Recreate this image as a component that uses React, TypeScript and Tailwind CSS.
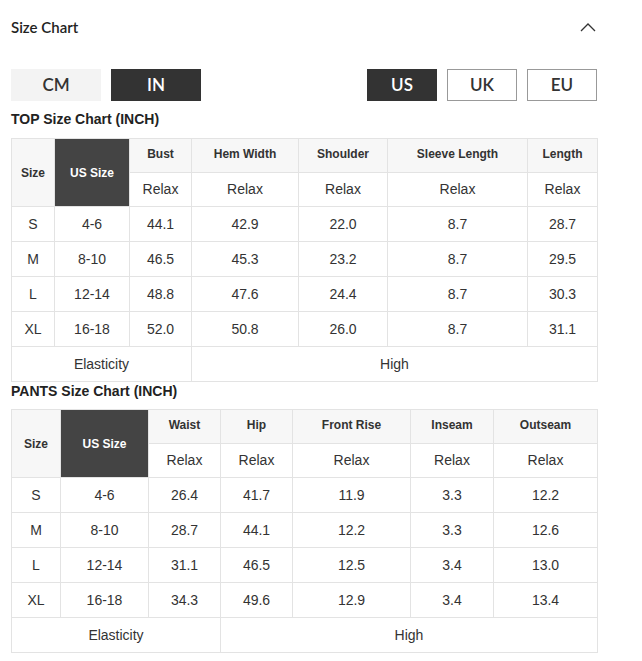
import { ReactNode } from 'react'

type Chart = {
  title: string
  widths: number[]
  cols: string[]
  rows: string[][]
  elasticSpan: number
}

const top: Chart = {
  title: 'TOP Size Chart (INCH)',
  widths: [43, 75, 62, 107, 89, 140, 70],
  cols: ['Bust', 'Hem Width', 'Shoulder', 'Sleeve Length', 'Length'],
  rows: [
    ['S', '4-6', '44.1', '42.9', '22.0', '8.7', '28.7'],
    ['M', '8-10', '46.5', '45.3', '23.2', '8.7', '29.5'],
    ['L', '12-14', '48.8', '47.6', '24.4', '8.7', '30.3'],
    ['XL', '16-18', '52.0', '50.8', '26.0', '8.7', '31.1'],
  ],
  elasticSpan: 3,
}

const pants: Chart = {
  title: 'PANTS Size Chart (INCH)',
  widths: [49, 88, 72, 72, 118, 83, 104],
  cols: ['Waist', 'Hip', 'Front Rise', 'Inseam', 'Outseam'],
  rows: [
    ['S', '4-6', '26.4', '41.7', '11.9', '3.3', '12.2'],
    ['M', '8-10', '28.7', '44.1', '12.2', '3.3', '12.6'],
    ['L', '12-14', '31.1', '46.5', '12.5', '3.4', '13.0'],
    ['XL', '16-18', '34.3', '49.6', '12.9', '3.4', '13.4'],
  ],
  elasticSpan: 3,
}

function Cell({ children, className = '', ...rest }: { children?: ReactNode; className?: string; colSpan?: number; rowSpan?: number }) {
  return (
    <td {...rest} className={`border border-[#e3e3e3] text-center p-0 ${className}`}>
      {children}
    </td>
  )
}

function SizeTable({ chart, first }: { chart: Chart; first?: boolean }) {
  return (
    <>
      <div className={`text-[14px] font-bold leading-[18px] text-[#222] ${first ? 'mt-[9px] mb-[10px]' : 'mt-0 mb-[9px]'}`}>
        {chart.title}
      </div>
      <table className="w-[586px] table-fixed border-collapse font-['Liberation_Sans',Arial,sans-serif] text-[#333]">
        <colgroup>
          {chart.widths.map((w, i) => (
            <col key={i} style={{ width: w }} />
          ))}
        </colgroup>
        <tbody>
          <tr className="h-[34px]">
            <Cell rowSpan={2} className="bg-[#f7f7f7] text-[12px] font-bold">Size</Cell>
            <Cell rowSpan={2} className="bg-[#444444] text-white text-[12px] font-bold">US Size</Cell>
            {chart.cols.map((c) => (
              <Cell key={c} className="bg-[#f7f7f7] pb-[3px] text-[12px] font-bold">{c}</Cell>
            ))}
          </tr>
          <tr className="h-[34px]">
            {chart.cols.map((c) => (
              <Cell key={c} className="text-[14px]">Relax</Cell>
            ))}
          </tr>
          {chart.rows.map((r) => (
            <tr key={r[0]} className="h-[35px]">
              {r.map((v, i) => (
                <Cell key={i} className="text-[14px]">{v}</Cell>
              ))}
            </tr>
          ))}
          <tr className="h-[35px]">
            <Cell colSpan={chart.elasticSpan} className="text-[14px]">Elasticity</Cell>
            <Cell colSpan={7 - chart.elasticSpan} className="text-[14px]">High</Cell>
          </tr>
        </tbody>
      </table>
    </>
  )
}

export default function App() {
  return (
    <div className="min-h-[661px] w-[642px] bg-white font-['Liberation_Sans',Arial,sans-serif] text-[#333]">
      <div className="ml-[11px] w-[586px]">
        <div className="flex h-[54px] items-center justify-between">
          <span className="font-['Lato',sans-serif] text-[15px] font-semibold text-[#222]">Size Chart</span>
          <svg width="16" height="10" viewBox="0 0 16 10" className="mr-[1px]" fill="none">
            <path d="M1 9 L8 2 L15 9" stroke="#333" strokeWidth="1.3" />
          </svg>
        </div>
        <div className="mt-[15px] flex h-[32px] items-center justify-between font-['Lato',sans-serif] text-[17px] font-semibold">
          <div className="flex gap-[10px]">
            <button className="h-[32px] w-[90px] bg-[#f3f3f3] text-[#333]">CM</button>
            <button className="h-[32px] w-[90px] bg-[#333] text-white">IN</button>
          </div>
          <div className="flex gap-[10px]">
            <button className="h-[32px] w-[70px] bg-[#333] text-white">US</button>
            <button className="h-[32px] w-[70px] border border-[#999] text-[#333]">UK</button>
            <button className="h-[32px] w-[70px] border border-[#999] text-[#333]">EU</button>
          </div>
        </div>
        <SizeTable chart={top} first />
        <SizeTable chart={pants} />
      </div>
    </div>
  )
}
